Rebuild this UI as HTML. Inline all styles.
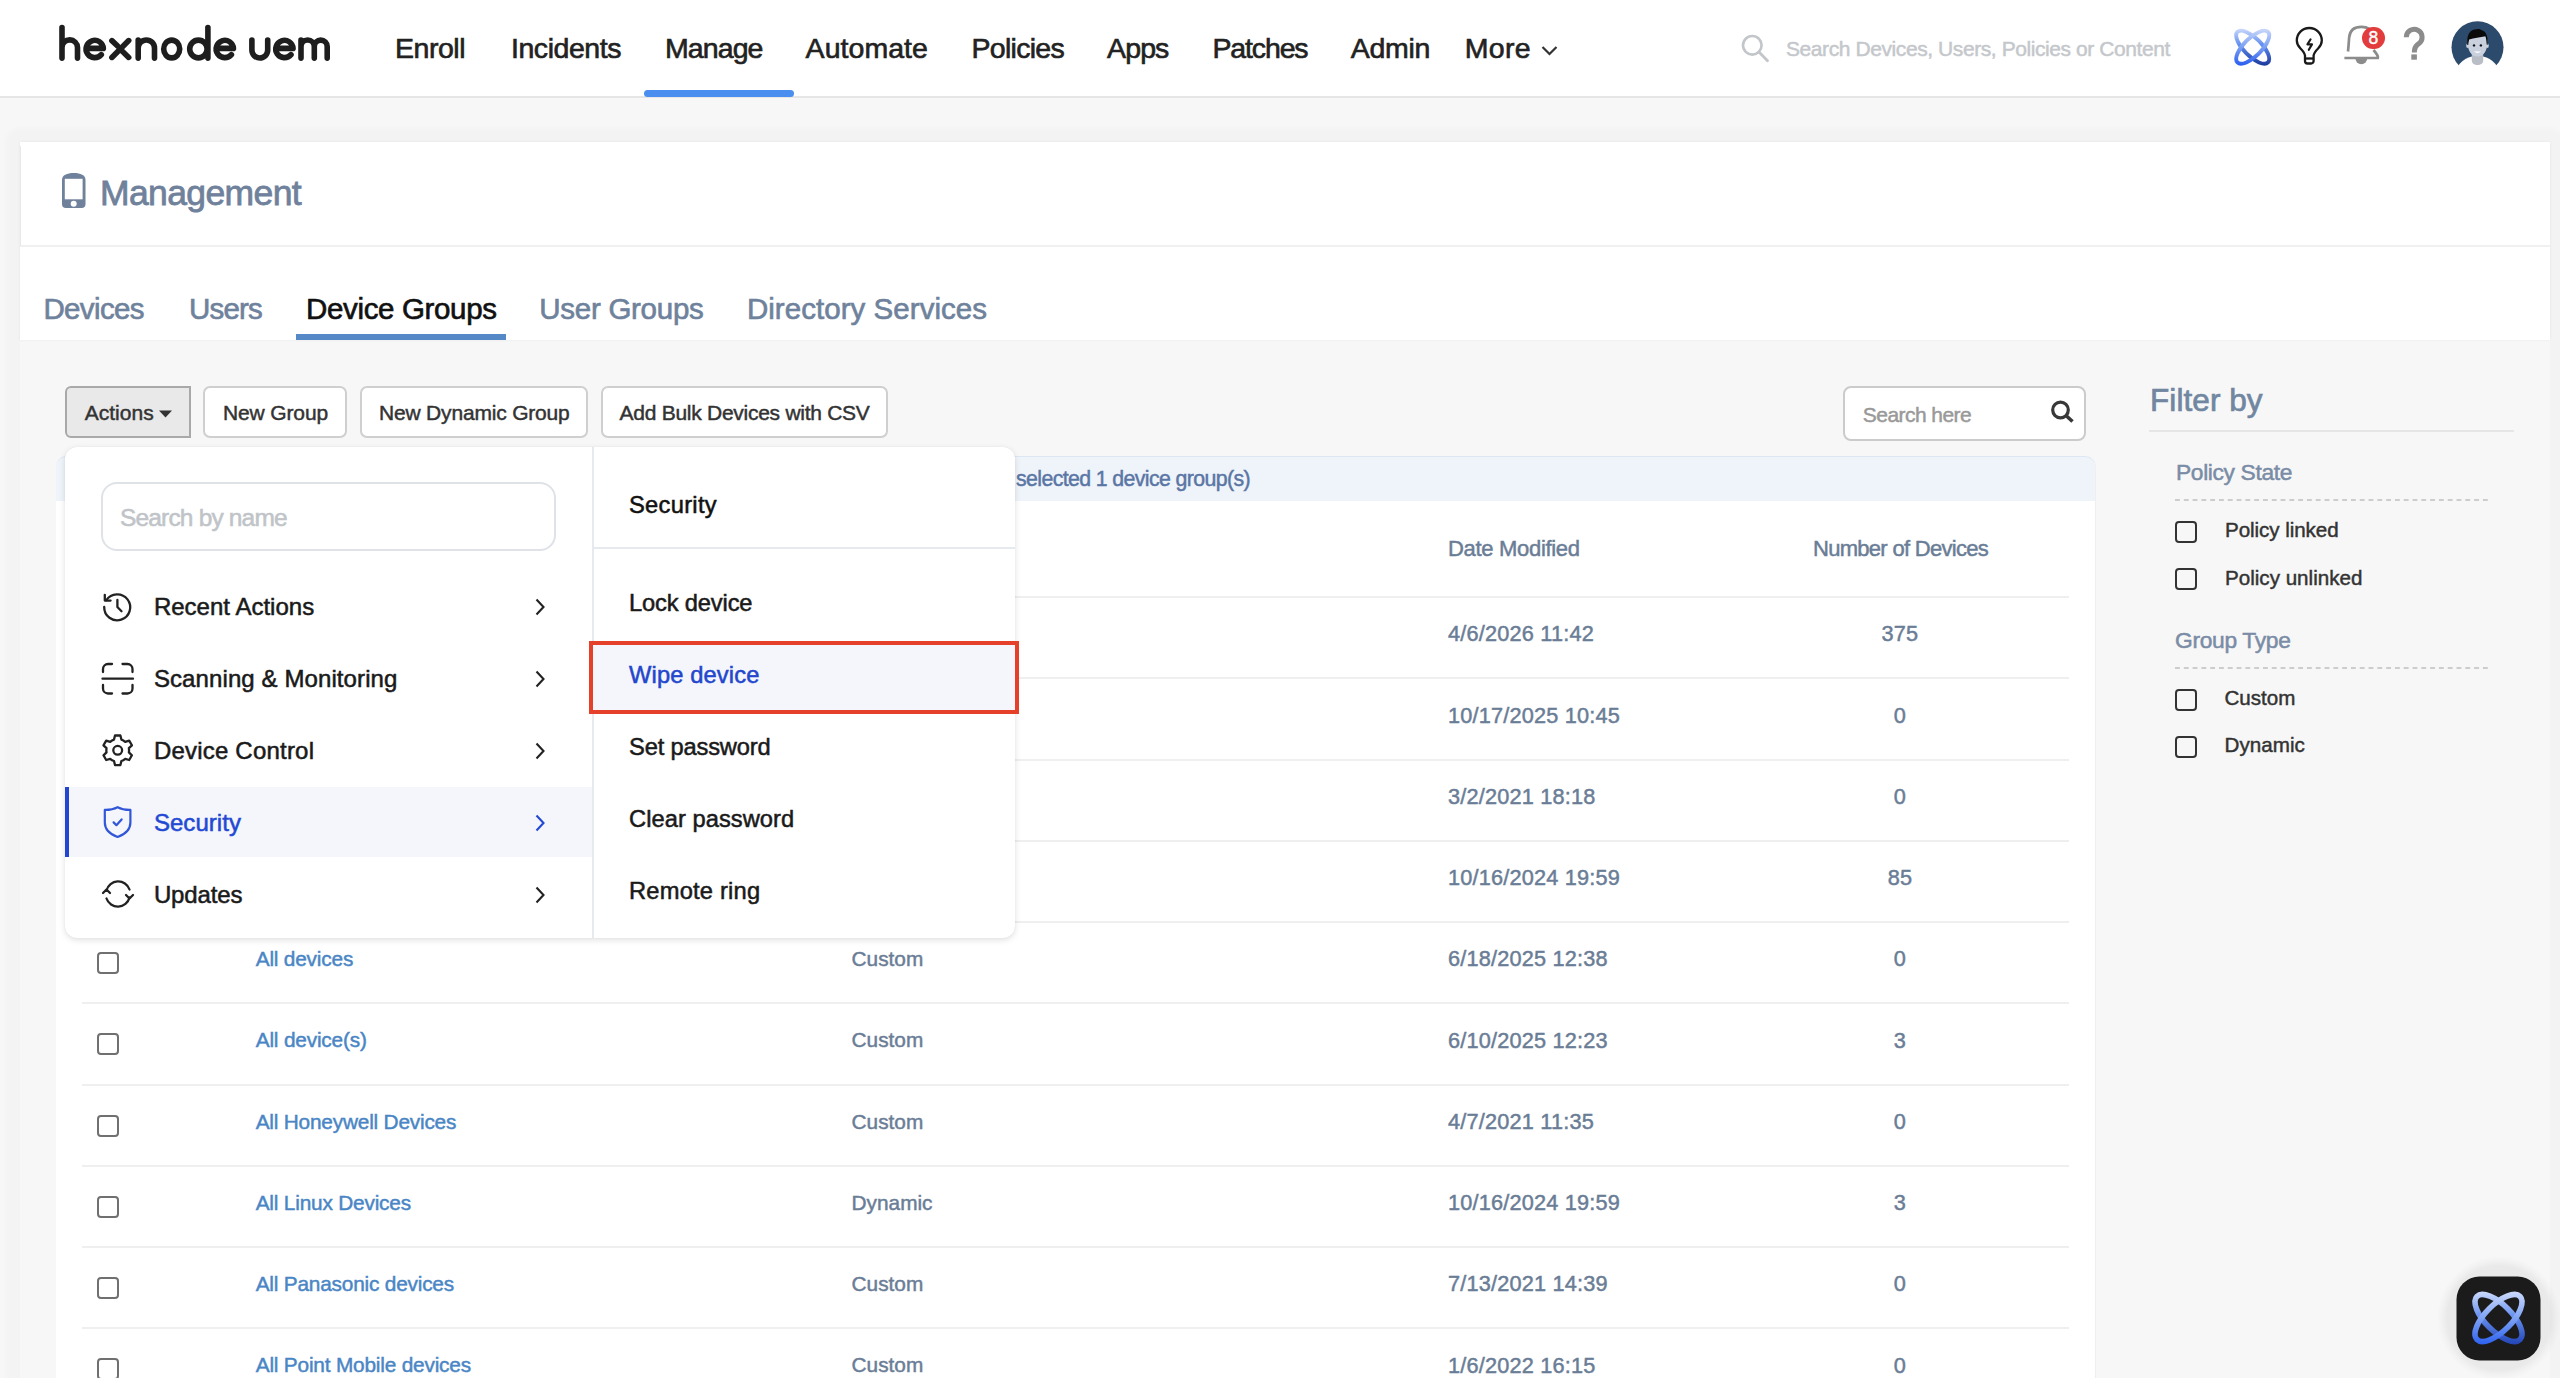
<!DOCTYPE html>
<html><head><meta charset="utf-8"><title>Hexnode UEM - Device Groups</title>
<style>
html,body{margin:0;padding:0;width:2560px;height:1378px;overflow:hidden;background:#f7f7f7;font-family:"Liberation Sans",sans-serif;}
.t{position:absolute;white-space:nowrap;line-height:1;}
.hdr{position:absolute;left:0;top:0;width:2560px;height:96px;background:#fff;}
</style></head><body>
<div class="hdr"></div>
<div style="position:absolute;left:0;top:96px;width:2560px;height:2px;background:#e6e6e6"></div>
<svg style="position:absolute;left:0;top:0" width="360" height="96" viewBox="0 0 360 96">
<g fill="none" stroke="#1e1e1e" stroke-width="5.6" stroke-linecap="round" stroke-linejoin="round">
<path d="M62,58.1 V27.6 M62,47.6 A7.75,7.75 0 0 1 77.5,47.6 V58.1"/>
<path d="M86.05,48.4 H103.35 A8.65,8.65 0 1 0 101.30,54.6"/>
<path d="M111.9,57.4 L128.7,40.6 M121.6,50.6 L128.7,57.4 M111.9,40.6 L117.6,46"/>
<path d="M138.2,58.1 V40 M138.2,48.1 A8.15,8.15 0 0 1 154.5,48.1 V58.1"/>
<ellipse cx="171.7" cy="49" rx="8" ry="8.9"/>
<ellipse cx="198.4" cy="49" rx="8.7" ry="8.9"/>
<path d="M207.9,27.6 V58.1"/>
<path d="M216.15,48.4 H233.45 A8.65,8.65 0 1 0 231.40,54.6"/>
<path d="M251.9,40 V50.1 A7.9,7.9 0 0 0 267.7,50.1 V40"/>
<path d="M275.75,48.4 H293.05 A8.65,8.65 0 1 0 291.00,54.6"/>
<path d="M301,58.1 V40 M301,46.6 A6.65,6.65 0 0 1 314.3,46.6 V58.1 M314.3,46.6 A6.45,6.45 0 0 1 327.2,46.6 V58.1"/>
</g></svg>
<div class="t" style="left:395.00px;top:33.97px;font-size:28.50px;color:#222;letter-spacing:-0.478px;-webkit-text-stroke:0.63px #222;">Enroll</div>
<div class="t" style="left:511.00px;top:33.97px;font-size:28.50px;color:#222;letter-spacing:-0.453px;-webkit-text-stroke:0.63px #222;">Incidents</div>
<div class="t" style="left:665.00px;top:33.97px;font-size:28.50px;color:#222;letter-spacing:-0.916px;-webkit-text-stroke:0.63px #222;">Manage</div>
<div class="t" style="left:805.60px;top:33.97px;font-size:28.50px;color:#222;letter-spacing:0.051px;-webkit-text-stroke:0.63px #222;">Automate</div>
<div class="t" style="left:971.50px;top:33.97px;font-size:28.50px;color:#222;letter-spacing:-0.714px;-webkit-text-stroke:0.63px #222;">Policies</div>
<div class="t" style="left:1107.00px;top:33.97px;font-size:28.50px;color:#222;letter-spacing:-0.865px;-webkit-text-stroke:0.63px #222;">Apps</div>
<div class="t" style="left:1212.40px;top:33.97px;font-size:28.50px;color:#222;letter-spacing:-1.126px;-webkit-text-stroke:0.63px #222;">Patches</div>
<div class="t" style="left:1350.80px;top:33.97px;font-size:28.50px;color:#222;letter-spacing:-0.277px;-webkit-text-stroke:0.63px #222;">Admin</div>
<div class="t" style="left:1464.80px;top:33.97px;font-size:28.50px;color:#222;letter-spacing:0.317px;-webkit-text-stroke:0.63px #222;">More</div>
<svg style="position:absolute;left:1540px;top:44px" width="20" height="14" viewBox="0 0 20 14"><path d="M2.5,3 L9.5,10 L16.5,3" fill="none" stroke="#333" stroke-width="2.2"/></svg>
<div style="position:absolute;left:644px;top:90px;width:150px;height:7px;background:#4a8ef0;border-radius:4px"></div>
<svg style="position:absolute;left:1738px;top:32px" width="34" height="34" viewBox="0 0 34 34"><circle cx="14.3" cy="13.3" r="9.3" fill="none" stroke="#c2c5c9" stroke-width="2.6"/><path d="M21,20 L29.5,28.8" stroke="#c2c5c9" stroke-width="2.8" stroke-linecap="round"/></svg>
<div class="t" style="left:1786.00px;top:38.12px;font-size:21.00px;color:#c4c7cb;letter-spacing:-0.417px;-webkit-text-stroke:0.46px #c4c7cb;">Search Devices, Users, Policies or Content</div>
<svg style="position:absolute;left:2226px;top:20px" width="54" height="54" viewBox="0 0 54 54">
<defs>
<linearGradient id="ag1" gradientUnits="userSpaceOnUse" x1="26.7" y1="9" x2="26.7" y2="45" gradientTransform="rotate(-45 26.7 27.2)"><stop offset="0" stop-color="#c9d8fb"/><stop offset="0.45" stop-color="#5f8cf0"/><stop offset="1" stop-color="#1e3b9e"/></linearGradient>
<linearGradient id="ag2" gradientUnits="userSpaceOnUse" x1="26.7" y1="9" x2="26.7" y2="45" gradientTransform="rotate(45 26.7 27.2)"><stop offset="0" stop-color="#c9d8fb"/><stop offset="0.5" stop-color="#7aa0f3"/><stop offset="1" stop-color="#2c5ff0"/></linearGradient>
</defs>
<g fill="none" stroke-width="3.9">
<ellipse cx="26.7" cy="27.2" rx="21.6" ry="8.9" transform="rotate(45 26.7 27.2)" stroke="url(#ag1)"/>
<ellipse cx="26.7" cy="27.2" rx="21.6" ry="8.9" transform="rotate(-45 26.7 27.2)" stroke="url(#ag2)"/>
</g></svg>
<svg style="position:absolute;left:2290px;top:20px" width="40" height="50" viewBox="0 0 40 50">
<g fill="none" stroke="#1a1a1a" stroke-width="2.3" stroke-linejoin="round">
<path d="M15,35.5 C14.5,32.5 13,31 10.5,28.5 C7.5,25.5 6.8,23 6.8,20.5 A12.5,12.5 0 0 1 31.8,20.5 C31.8,23 31.1,25.5 28.1,28.5 C25.6,31 24.1,32.5 23.6,35.5 V41 A2.5,2.5 0 0 1 21.1,43.5 H17.5 A2.5,2.5 0 0 1 15,41 Z"/>
<path d="M15,38.5 H23.6"/>
<path d="M20.6,19.3 L17.4,24.4 H22 L18.8,29.8" stroke-linecap="round" stroke-width="2.1"/>
</g></svg>
<svg style="position:absolute;left:2340px;top:20px" width="46" height="50" viewBox="0 0 46 50">
<g fill="none" stroke="#8c8c8c" stroke-width="2.7">
<path d="M8,31.5 C8.5,27 8.8,22 9.2,17 C10,10 14.5,6.8 21.5,6.8 C28,6.8 31.5,10 32.5,15"/>
<path d="M4.4,38 H37.8 C38.5,36 37,34 33.5,30"/>
</g>
<path d="M15.3,38 A6,6.2 0 0 0 27.3,38 Z" fill="#8c8c8c"/>
</svg>
<div style="position:absolute;left:2362px;top:26.5px;width:22.5px;height:22.5px;border-radius:50%;background:#e23c3c"></div>
<div class="t" style="left:2368.43px;top:30.39px;font-size:17.50px;color:#fff;-webkit-text-stroke:0.38px #fff;">8</div>
<svg style="position:absolute;left:2398px;top:24px" width="32" height="40" viewBox="0 0 32 40">
<path d="M8.3,13.3 A7.9,7.9 0 1 1 20.5,19.8 C17.5,22 16.4,23.5 16.4,27 V28.5" fill="none" stroke="#8c8c8c" stroke-width="5"/>
<rect x="13.3" y="30.4" width="5.6" height="5.3" fill="#8c8c8c"/>
</svg>
<svg style="position:absolute;left:2448px;top:18px" width="60" height="60" viewBox="0 0 60 60">
<defs><clipPath id="cc"><circle cx="29.5" cy="29.3" r="26.1"/></clipPath><clipPath id="cc2"><circle cx="29.5" cy="29.3" r="27.5"/></clipPath></defs>
<circle cx="29.5" cy="29.3" r="26" fill="#2c4a6b"/>
<g clip-path="url(#cc2)">
<path d="M6,60 V56 C9,46 18,37.8 29.5,37.8 C41,37.8 50,46 53,56 V60 Z" fill="#fff"/>
</g>
<g clip-path="url(#cc)">
<path d="M23.8,34 H35.2 V42.5 C35.2,45.5 32.5,47 29.5,47 C26.5,47 23.8,45.5 23.8,42.5 Z" fill="#b9bdc6"/>
<path d="M22,17.5 C20.5,19.5 19.6,21.5 19.6,23 C19.4,33 23.5,38.5 29.5,38.5 C35.5,38.5 39.6,33 39.4,23 C39.4,21.5 38.5,19.5 37,17.5 Z" fill="#c9d0de"/>
<ellipse cx="19.6" cy="27.8" rx="1.4" ry="2.2" fill="#c9d0de"/><ellipse cx="39.4" cy="27.8" rx="1.4" ry="2.2" fill="#c9d0de"/>
<path d="M19.3,27 C18.5,16 22,11.6 28.5,11.2 C30.5,10.6 32.3,10.9 33.4,12 C37.8,13.3 40.3,17.5 39.6,27 L38.7,26.6 C38.4,22.5 38,20 37.5,18.3 C32,19.5 26,20.3 21.2,21.4 C20.6,23 20.4,25 20.2,27 Z" fill="#0a0a0a"/>
<circle cx="26" cy="27.4" r="1.2" fill="#111"/><circle cx="32.9" cy="27.4" r="1.2" fill="#111"/>
<path d="M25.7,33 Q29.5,37 33.3,33 Q29.5,34 25.7,33 Z" fill="#fff"/>
</g></svg>
<div style="position:absolute;left:6px;top:128px;width:2558px;height:1300px;border-radius:14px;background:rgba(0,0,0,0.015);filter:blur(2px)"></div>
<div style="position:absolute;left:20px;top:340px;width:2530px;height:1040px;background:#f7f7f7"></div>
<div style="position:absolute;left:20px;top:142px;width:2530px;height:198px;background:#fff;box-shadow:0 0 3px rgba(0,0,0,0.06)"></div>
<div style="position:absolute;left:20px;top:245px;width:2530px;height:2px;background:#f0f0f0"></div>
<div style="position:absolute;left:20px;top:146px;width:1px;height:100px;background:#e9e9e9"></div>
<svg style="position:absolute;left:61px;top:172px" width="26" height="38" viewBox="0 0 26 38">
<path d="M1,8 C1,3 6,1 12.8,1 C19.6,1 24.5,3 24.5,8 V32 A4,4 0 0 1 20.5,36 H5 A4,4 0 0 1 1,32 Z" fill="#6f819b"/>
<rect x="3.8" y="6.8" width="17.8" height="20.5" fill="#fff"/>
<circle cx="12.7" cy="31.7" r="3" fill="#fff"/>
</svg>
<div class="t" style="left:100.00px;top:176.45px;font-size:35.50px;color:#6f819b;letter-spacing:-0.622px;-webkit-text-stroke:0.78px #6f819b;">Management</div>
<div class="t" style="left:43.40px;top:294.23px;font-size:29.50px;color:#6f829c;letter-spacing:-0.618px;-webkit-text-stroke:0.65px #6f829c;">Devices</div>
<div class="t" style="left:189.00px;top:294.23px;font-size:29.50px;color:#6f829c;letter-spacing:-0.807px;-webkit-text-stroke:0.65px #6f829c;">Users</div>
<div class="t" style="left:306.00px;top:294.23px;font-size:29.50px;color:#111;letter-spacing:-0.347px;-webkit-text-stroke:0.65px #111;">Device Groups</div>
<div class="t" style="left:539.30px;top:294.23px;font-size:29.50px;color:#6f829c;letter-spacing:-0.275px;-webkit-text-stroke:0.65px #6f829c;">User Groups</div>
<div class="t" style="left:746.90px;top:294.23px;font-size:29.50px;color:#6f829c;letter-spacing:0.048px;-webkit-text-stroke:0.65px #6f829c;">Directory Services</div>
<div style="position:absolute;left:296px;top:334px;width:210px;height:6px;background:#5488c7"></div>
<div style="position:absolute;left:65px;top:386px;width:126px;height:52px;box-sizing:border-box;border:2px solid #a9a9a9;border-radius:6px 0 0 6px;background:#e9e9e9"></div>
<div class="t" style="left:84.70px;top:402.02px;font-size:21.00px;color:#333;letter-spacing:0.019px;-webkit-text-stroke:0.46px #333;">Actions</div>
<svg style="position:absolute;left:158px;top:409px" width="15" height="10" viewBox="0 0 15 10"><path d="M1,1.5 H14 L7.5,8.5 Z" fill="#333"/></svg>
<div style="position:absolute;left:203.0px;top:386px;width:144.0px;height:52px;box-sizing:border-box;border:2px solid #cfcfcf;border-radius:7px;background:#fff"></div>
<div class="t" style="left:223.00px;top:402.02px;font-size:21.00px;color:#333;letter-spacing:-0.135px;-webkit-text-stroke:0.46px #333;">New Group</div>
<div style="position:absolute;left:359.7px;top:386px;width:228.8px;height:52px;box-sizing:border-box;border:2px solid #cfcfcf;border-radius:7px;background:#fff"></div>
<div class="t" style="left:379.00px;top:402.02px;font-size:21.00px;color:#333;letter-spacing:-0.184px;-webkit-text-stroke:0.46px #333;">New Dynamic Group</div>
<div style="position:absolute;left:601.0px;top:386px;width:287.0px;height:52px;box-sizing:border-box;border:2px solid #cfcfcf;border-radius:7px;background:#fff"></div>
<div class="t" style="left:619.60px;top:402.02px;font-size:21.00px;color:#333;letter-spacing:-0.271px;-webkit-text-stroke:0.46px #333;">Add Bulk Devices with CSV</div>
<div style="position:absolute;left:1843px;top:386px;width:243px;height:55px;box-sizing:border-box;border:2px solid #cbcbcb;border-radius:8px;background:#fff"></div>
<div class="t" style="left:1862.80px;top:404.02px;font-size:21.00px;color:#999;letter-spacing:-0.546px;-webkit-text-stroke:0.46px #999;">Search here</div>
<svg style="position:absolute;left:2048px;top:398px" width="30" height="28" viewBox="0 0 30 28"><circle cx="12.5" cy="12" r="7.8" fill="none" stroke="#383838" stroke-width="3.2"/><path d="M18,17.5 L24.5,23.5" stroke="#383838" stroke-width="3.6" stroke-linecap="butt"/></svg>
<div class="t" style="left:2150.00px;top:384.74px;font-size:31.50px;color:#7186a0;letter-spacing:0.075px;-webkit-text-stroke:0.69px #7186a0;">Filter by</div>
<div style="position:absolute;left:2149px;top:429.5px;width:365px;height:2px;background:#e6e6e6"></div>
<div class="t" style="left:2176.00px;top:460.80px;font-size:22.80px;color:#7a8ca6;letter-spacing:-0.366px;-webkit-text-stroke:0.50px #7a8ca6;">Policy State</div>
<div style="position:absolute;left:2175px;top:499.2px;width:313px;height:2px;background-image:linear-gradient(to right,#cdcdcd 0,#cdcdcd 5px,transparent 5px);background-size:8.8px 2px"></div>
<div style="position:absolute;left:2175.0px;top:520.7px;width:22px;height:22px;box-sizing:border-box;border:2.4px solid #333;border-radius:4px"></div>
<div class="t" style="left:2225.00px;top:520.26px;font-size:20.60px;color:#333;letter-spacing:-0.069px;-webkit-text-stroke:0.45px #333;">Policy linked</div>
<div style="position:absolute;left:2175.0px;top:568.3px;width:22px;height:22px;box-sizing:border-box;border:2.4px solid #333;border-radius:4px"></div>
<div class="t" style="left:2225.00px;top:567.86px;font-size:20.60px;color:#333;-webkit-text-stroke:0.45px #333;">Policy unlinked</div>
<div class="t" style="left:2175.00px;top:628.90px;font-size:22.80px;color:#7a8ca6;letter-spacing:-0.322px;-webkit-text-stroke:0.50px #7a8ca6;">Group Type</div>
<div style="position:absolute;left:2175px;top:667.0px;width:313px;height:2px;background-image:linear-gradient(to right,#cdcdcd 0,#cdcdcd 5px,transparent 5px);background-size:8.8px 2px"></div>
<div style="position:absolute;left:2175.0px;top:688.5px;width:22px;height:22px;box-sizing:border-box;border:2.4px solid #333;border-radius:4px"></div>
<div class="t" style="left:2224.50px;top:688.26px;font-size:20.60px;color:#333;letter-spacing:-0.029px;-webkit-text-stroke:0.45px #333;">Custom</div>
<div style="position:absolute;left:2175.0px;top:735.8px;width:22px;height:22px;box-sizing:border-box;border:2.4px solid #333;border-radius:4px"></div>
<div class="t" style="left:2224.50px;top:735.16px;font-size:20.60px;color:#333;letter-spacing:0.053px;-webkit-text-stroke:0.45px #333;">Dynamic</div>
<div style="position:absolute;left:56px;top:456px;width:2039px;height:930px;background:#fff;border-radius:10px 10px 0 0;box-shadow:1px 0 0 #efefef"></div>
<div style="position:absolute;left:56px;top:456px;width:2039px;height:45px;background:#eff3fa;border-top:1.5px solid #dde6f3;box-sizing:border-box;border-radius:10px 10px 0 0"></div>
<div class="t" style="left:1016.00px;top:468.87px;font-size:21.30px;color:#5a76a5;letter-spacing:-0.609px;-webkit-text-stroke:0.47px #5a76a5;">selected 1 device group(s)</div>
<div class="t" style="left:1448.00px;top:537.98px;font-size:22.00px;color:#6a7d96;letter-spacing:-0.311px;-webkit-text-stroke:0.48px #6a7d96;">Date Modified</div>
<div class="t" style="left:1813.00px;top:537.98px;font-size:22.00px;color:#6a7d96;letter-spacing:-0.710px;-webkit-text-stroke:0.48px #6a7d96;">Number of Devices</div>
<div style="position:absolute;left:82px;top:596.00px;width:1987px;height:2px;background:#efefef"></div>
<div style="position:absolute;left:82px;top:677.25px;width:1987px;height:2px;background:#efefef"></div>
<div style="position:absolute;left:82px;top:758.50px;width:1987px;height:2px;background:#efefef"></div>
<div style="position:absolute;left:82px;top:839.75px;width:1987px;height:2px;background:#efefef"></div>
<div style="position:absolute;left:82px;top:921.00px;width:1987px;height:2px;background:#efefef"></div>
<div style="position:absolute;left:82px;top:1002.25px;width:1987px;height:2px;background:#efefef"></div>
<div style="position:absolute;left:82px;top:1083.50px;width:1987px;height:2px;background:#efefef"></div>
<div style="position:absolute;left:82px;top:1164.75px;width:1987px;height:2px;background:#efefef"></div>
<div style="position:absolute;left:82px;top:1246.00px;width:1987px;height:2px;background:#efefef"></div>
<div style="position:absolute;left:82px;top:1327.25px;width:1987px;height:2px;background:#efefef"></div>
<div style="position:absolute;left:96.6px;top:627.1px;width:22px;height:22px;box-sizing:border-box;border:2.2px solid #707070;border-radius:4px"></div>
<div class="t" style="left:255.70px;top:624.19px;font-size:20.80px;color:#4a86c5;letter-spacing:-0.218px;-webkit-text-stroke:0.46px #4a86c5;">Group A</div>
<div class="t" style="left:851.60px;top:624.19px;font-size:20.80px;color:#6a7d96;-webkit-text-stroke:0.46px #6a7d96;">Custom</div>
<div class="t" style="left:1448.00px;top:623.43px;font-size:21.70px;color:#6a7d96;letter-spacing:0.200px;-webkit-text-stroke:0.48px #6a7d96;">4/6/2026 11:42</div>
<div class="t" style="left:1881.60px;top:623.43px;font-size:21.70px;color:#6a7d96;letter-spacing:0.200px;-webkit-text-stroke:0.48px #6a7d96;">375</div>
<div style="position:absolute;left:96.6px;top:708.4px;width:22px;height:22px;box-sizing:border-box;border:2.2px solid #707070;border-radius:4px"></div>
<div class="t" style="left:255.70px;top:705.44px;font-size:20.80px;color:#4a86c5;letter-spacing:-0.221px;-webkit-text-stroke:0.46px #4a86c5;">Group B</div>
<div class="t" style="left:851.60px;top:705.44px;font-size:20.80px;color:#6a7d96;-webkit-text-stroke:0.46px #6a7d96;">Custom</div>
<div class="t" style="left:1448.00px;top:704.68px;font-size:21.70px;color:#6a7d96;letter-spacing:0.200px;-webkit-text-stroke:0.48px #6a7d96;">10/17/2025 10:45</div>
<div class="t" style="left:1893.87px;top:704.68px;font-size:21.70px;color:#6a7d96;-webkit-text-stroke:0.48px #6a7d96;">0</div>
<div style="position:absolute;left:96.6px;top:789.6px;width:22px;height:22px;box-sizing:border-box;border:2.2px solid #707070;border-radius:4px"></div>
<div class="t" style="left:255.70px;top:786.69px;font-size:20.80px;color:#4a86c5;letter-spacing:-0.225px;-webkit-text-stroke:0.46px #4a86c5;">Group C</div>
<div class="t" style="left:851.60px;top:786.69px;font-size:20.80px;color:#6a7d96;-webkit-text-stroke:0.46px #6a7d96;">Custom</div>
<div class="t" style="left:1448.00px;top:785.93px;font-size:21.70px;color:#6a7d96;letter-spacing:0.200px;-webkit-text-stroke:0.48px #6a7d96;">3/2/2021 18:18</div>
<div class="t" style="left:1893.87px;top:785.93px;font-size:21.70px;color:#6a7d96;-webkit-text-stroke:0.48px #6a7d96;">0</div>
<div style="position:absolute;left:96.6px;top:870.9px;width:22px;height:22px;box-sizing:border-box;border:2.2px solid #707070;border-radius:4px"></div>
<div class="t" style="left:255.70px;top:867.94px;font-size:20.80px;color:#4a86c5;letter-spacing:-0.225px;-webkit-text-stroke:0.46px #4a86c5;">Group D</div>
<div class="t" style="left:851.60px;top:867.94px;font-size:20.80px;color:#6a7d96;-webkit-text-stroke:0.46px #6a7d96;">Dynamic</div>
<div class="t" style="left:1448.00px;top:867.18px;font-size:21.70px;color:#6a7d96;letter-spacing:0.200px;-webkit-text-stroke:0.48px #6a7d96;">10/16/2024 19:59</div>
<div class="t" style="left:1887.73px;top:867.18px;font-size:21.70px;color:#6a7d96;letter-spacing:0.200px;-webkit-text-stroke:0.48px #6a7d96;">85</div>
<div style="position:absolute;left:96.6px;top:952.1px;width:22px;height:22px;box-sizing:border-box;border:2.2px solid #707070;border-radius:4px"></div>
<div class="t" style="left:255.70px;top:949.19px;font-size:20.80px;color:#4a86c5;letter-spacing:-0.181px;-webkit-text-stroke:0.46px #4a86c5;">All devices</div>
<div class="t" style="left:851.60px;top:949.19px;font-size:20.80px;color:#6a7d96;-webkit-text-stroke:0.46px #6a7d96;">Custom</div>
<div class="t" style="left:1448.00px;top:948.43px;font-size:21.70px;color:#6a7d96;letter-spacing:0.200px;-webkit-text-stroke:0.48px #6a7d96;">6/18/2025 12:38</div>
<div class="t" style="left:1893.87px;top:948.43px;font-size:21.70px;color:#6a7d96;-webkit-text-stroke:0.48px #6a7d96;">0</div>
<div style="position:absolute;left:96.6px;top:1033.4px;width:22px;height:22px;box-sizing:border-box;border:2.2px solid #707070;border-radius:4px"></div>
<div class="t" style="left:255.70px;top:1030.44px;font-size:20.80px;color:#4a86c5;letter-spacing:-0.174px;-webkit-text-stroke:0.46px #4a86c5;">All device(s)</div>
<div class="t" style="left:851.60px;top:1030.44px;font-size:20.80px;color:#6a7d96;-webkit-text-stroke:0.46px #6a7d96;">Custom</div>
<div class="t" style="left:1448.00px;top:1029.68px;font-size:21.70px;color:#6a7d96;letter-spacing:0.200px;-webkit-text-stroke:0.48px #6a7d96;">6/10/2025 12:23</div>
<div class="t" style="left:1893.87px;top:1029.68px;font-size:21.70px;color:#6a7d96;-webkit-text-stroke:0.48px #6a7d96;">3</div>
<div style="position:absolute;left:96.6px;top:1114.6px;width:22px;height:22px;box-sizing:border-box;border:2.2px solid #707070;border-radius:4px"></div>
<div class="t" style="left:255.70px;top:1111.69px;font-size:20.80px;color:#4a86c5;letter-spacing:-0.195px;-webkit-text-stroke:0.46px #4a86c5;">All Honeywell Devices</div>
<div class="t" style="left:851.60px;top:1111.69px;font-size:20.80px;color:#6a7d96;-webkit-text-stroke:0.46px #6a7d96;">Custom</div>
<div class="t" style="left:1448.00px;top:1110.93px;font-size:21.70px;color:#6a7d96;letter-spacing:0.200px;-webkit-text-stroke:0.48px #6a7d96;">4/7/2021 11:35</div>
<div class="t" style="left:1893.87px;top:1110.93px;font-size:21.70px;color:#6a7d96;-webkit-text-stroke:0.48px #6a7d96;">0</div>
<div style="position:absolute;left:96.6px;top:1195.9px;width:22px;height:22px;box-sizing:border-box;border:2.2px solid #707070;border-radius:4px"></div>
<div class="t" style="left:255.70px;top:1192.94px;font-size:20.80px;color:#4a86c5;letter-spacing:-0.186px;-webkit-text-stroke:0.46px #4a86c5;">All Linux Devices</div>
<div class="t" style="left:851.60px;top:1192.94px;font-size:20.80px;color:#6a7d96;-webkit-text-stroke:0.46px #6a7d96;">Dynamic</div>
<div class="t" style="left:1448.00px;top:1192.18px;font-size:21.70px;color:#6a7d96;letter-spacing:0.200px;-webkit-text-stroke:0.48px #6a7d96;">10/16/2024 19:59</div>
<div class="t" style="left:1893.87px;top:1192.18px;font-size:21.70px;color:#6a7d96;-webkit-text-stroke:0.48px #6a7d96;">3</div>
<div style="position:absolute;left:96.6px;top:1277.1px;width:22px;height:22px;box-sizing:border-box;border:2.2px solid #707070;border-radius:4px"></div>
<div class="t" style="left:255.70px;top:1274.19px;font-size:20.80px;color:#4a86c5;letter-spacing:-0.193px;-webkit-text-stroke:0.46px #4a86c5;">All Panasonic devices</div>
<div class="t" style="left:851.60px;top:1274.19px;font-size:20.80px;color:#6a7d96;-webkit-text-stroke:0.46px #6a7d96;">Custom</div>
<div class="t" style="left:1448.00px;top:1273.43px;font-size:21.70px;color:#6a7d96;letter-spacing:0.200px;-webkit-text-stroke:0.48px #6a7d96;">7/13/2021 14:39</div>
<div class="t" style="left:1893.87px;top:1273.43px;font-size:21.70px;color:#6a7d96;-webkit-text-stroke:0.48px #6a7d96;">0</div>
<div style="position:absolute;left:96.6px;top:1358.4px;width:22px;height:22px;box-sizing:border-box;border:2.2px solid #707070;border-radius:4px"></div>
<div class="t" style="left:255.70px;top:1355.44px;font-size:20.80px;color:#4a86c5;letter-spacing:-0.183px;-webkit-text-stroke:0.46px #4a86c5;">All Point Mobile devices</div>
<div class="t" style="left:851.60px;top:1355.44px;font-size:20.80px;color:#6a7d96;-webkit-text-stroke:0.46px #6a7d96;">Custom</div>
<div class="t" style="left:1448.00px;top:1354.68px;font-size:21.70px;color:#6a7d96;letter-spacing:0.200px;-webkit-text-stroke:0.48px #6a7d96;">1/6/2022 16:15</div>
<div class="t" style="left:1893.87px;top:1354.68px;font-size:21.70px;color:#6a7d96;-webkit-text-stroke:0.48px #6a7d96;">0</div>
<div style="position:absolute;left:65px;top:447px;width:950px;height:491px;background:#fff;border-radius:12px;box-shadow:0 2px 6px rgba(0,0,0,0.12),0 0 1px rgba(0,0,0,0.1)"></div>
<div style="position:absolute;left:591.5px;top:447px;width:2px;height:491px;background:#e6e9ee"></div>
<div style="position:absolute;left:593px;top:546.7px;width:422px;height:2px;background:#e6e9ee"></div>
<div style="position:absolute;left:100.7px;top:482.2px;width:455px;height:69px;box-sizing:border-box;border:2px solid #dfe3e8;border-radius:16px;background:#fff"></div>
<div class="t" style="left:120.00px;top:505.76px;font-size:24.50px;color:#c0c4c8;letter-spacing:-0.829px;-webkit-text-stroke:0.54px #c0c4c8;">Search by name</div>
<div style="position:absolute;left:65px;top:787px;width:526.5px;height:70px;background:#f4f6fc"></div>
<div style="position:absolute;left:65px;top:787px;width:4px;height:70px;background:#2346d0"></div>
<div class="t" style="left:153.90px;top:595.48px;font-size:24.00px;color:#1a1a1a;letter-spacing:0.015px;-webkit-text-stroke:0.53px #1a1a1a;">Recent Actions</div>
<svg style="position:absolute;left:531px;top:595.5px" width="18" height="22" viewBox="0 0 18 22"><path d="M5.5,3.5 L12.5,11 L5.5,18.5" fill="none" stroke="#222" stroke-width="2.1"/></svg>
<div class="t" style="left:153.90px;top:667.48px;font-size:24.00px;color:#1a1a1a;letter-spacing:0.101px;-webkit-text-stroke:0.53px #1a1a1a;">Scanning &amp; Monitoring</div>
<svg style="position:absolute;left:531px;top:667.5px" width="18" height="22" viewBox="0 0 18 22"><path d="M5.5,3.5 L12.5,11 L5.5,18.5" fill="none" stroke="#222" stroke-width="2.1"/></svg>
<div class="t" style="left:153.90px;top:739.48px;font-size:24.00px;color:#1a1a1a;letter-spacing:0.207px;-webkit-text-stroke:0.53px #1a1a1a;">Device Control</div>
<svg style="position:absolute;left:531px;top:739.5px" width="18" height="22" viewBox="0 0 18 22"><path d="M5.5,3.5 L12.5,11 L5.5,18.5" fill="none" stroke="#222" stroke-width="2.1"/></svg>
<div class="t" style="left:153.90px;top:811.48px;font-size:24.00px;color:#2349d4;letter-spacing:0.050px;-webkit-text-stroke:0.53px #2349d4;">Security</div>
<svg style="position:absolute;left:531px;top:811.5px" width="18" height="22" viewBox="0 0 18 22"><path d="M5.5,3.5 L12.5,11 L5.5,18.5" fill="none" stroke="#2349d4" stroke-width="2.1"/></svg>
<div class="t" style="left:153.90px;top:883.48px;font-size:24.00px;color:#1a1a1a;letter-spacing:-0.113px;-webkit-text-stroke:0.53px #1a1a1a;">Updates</div>
<svg style="position:absolute;left:531px;top:883.5px" width="18" height="22" viewBox="0 0 18 22"><path d="M5.5,3.5 L12.5,11 L5.5,18.5" fill="none" stroke="#222" stroke-width="2.1"/></svg>
<svg style="position:absolute;left:100px;top:590px" width="36" height="34" viewBox="0 0 36 34">
<g fill="none" stroke="#222" stroke-width="2.3" stroke-linecap="round" stroke-linejoin="round">
<path d="M6.3,10.2 A13,13 0 1 1 4.2,17"/>
<path d="M4.8,4.8 V10.6 H10.6"/>
<path d="M17.4,10 V17 L21.5,21.2"/>
</g></svg>
<svg style="position:absolute;left:100px;top:661px" width="36" height="36" viewBox="0 0 36 36">
<g fill="none" stroke="#222" stroke-width="2.3" stroke-linecap="round">
<path d="M3,11 V8 A5,5 0 0 1 8,3 H12"/>
<path d="M22.5,3 H27.5 A5,5 0 0 1 32.5,8 V11"/>
<path d="M32.5,24 V27.5 A5,5 0 0 1 27.5,32.5 H22.5"/>
<path d="M12,32.5 H8 A5,5 0 0 1 3,27.5 V24"/>
<path d="M2.5,17.7 H33"/>
</g></svg>
<svg style="position:absolute;left:100px;top:732px" width="36" height="36" viewBox="0 0 36 36">
<g fill="none" stroke="#222" stroke-width="2.3" stroke-linejoin="round">
<path d="M15,3.5 H20.4 L21.4,7.6 C22.8,8.1 24,8.8 25.2,9.8 L29.2,8.6 L31.9,13.3 L28.9,16.2 C29.1,17.6 29.1,19 28.9,20.4 L31.9,23.3 L29.2,28 L25.2,26.8 C24,27.8 22.8,28.5 21.4,29 L20.4,33.1 H15 L14,29 C12.6,28.5 11.4,27.8 10.2,26.8 L6.2,28 L3.5,23.3 L6.5,20.4 C6.3,19 6.3,17.6 6.5,16.2 L3.5,13.3 L6.2,8.6 L10.2,9.8 C11.4,8.8 12.6,8.1 14,7.6 Z"/>
<circle cx="17.7" cy="18.3" r="4.4"/>
</g></svg>
<svg style="position:absolute;left:100px;top:803px" width="36" height="38" viewBox="0 0 36 38">
<g fill="none" stroke="#3256d8" stroke-width="2.2" stroke-linecap="round" stroke-linejoin="round">
<path d="M17.6,4.2 C21,6 25.5,7 30.4,6.9 V19.5 C30.4,26.8 24.5,31.5 17.6,34 C10.7,31.5 4.8,26.8 4.8,19.5 V6.9 C9.7,7 14.2,6 17.6,4.2 Z"/>
<path d="M13.6,19.4 L16.4,22.2 L21.6,16.4"/>
</g></svg>
<svg style="position:absolute;left:100px;top:876px" width="36" height="36" viewBox="0 0 36 36">
<g fill="none" stroke="#222" stroke-width="2.3" stroke-linecap="round" stroke-linejoin="round">
<path d="M6.5,14.5 A12,12 0 0 1 29.5,13.5"/>
<path d="M29.5,21.5 A12,12 0 0 1 6.5,22.5"/>
<path d="M3,17 L6.5,13.5 L10,17"/>
<path d="M26,19 L29.5,22.5 L33,19"/>
</g></svg>
<div class="t" style="left:629.00px;top:494.44px;font-size:23.70px;color:#111;letter-spacing:0.298px;-webkit-text-stroke:0.52px #111;">Security</div>
<div style="position:absolute;left:593px;top:644px;width:422px;height:67px;background:#f4f6fc"></div>
<div class="t" style="left:629.00px;top:592.24px;font-size:23.70px;color:#1a1a1a;letter-spacing:-0.160px;-webkit-text-stroke:0.52px #1a1a1a;">Lock device</div>
<div class="t" style="left:629.00px;top:664.24px;font-size:23.70px;color:#2346cc;letter-spacing:0.137px;-webkit-text-stroke:0.52px #2346cc;">Wipe device</div>
<div class="t" style="left:629.00px;top:736.24px;font-size:23.70px;color:#1a1a1a;letter-spacing:-0.166px;-webkit-text-stroke:0.52px #1a1a1a;">Set password</div>
<div class="t" style="left:629.00px;top:808.24px;font-size:23.70px;color:#1a1a1a;letter-spacing:0.046px;-webkit-text-stroke:0.52px #1a1a1a;">Clear password</div>
<div class="t" style="left:629.00px;top:880.24px;font-size:23.70px;color:#1a1a1a;letter-spacing:0.210px;-webkit-text-stroke:0.52px #1a1a1a;">Remote ring</div>
<div style="position:absolute;left:589px;top:641px;width:429.5px;height:73px;box-sizing:border-box;border:4px solid #e5402a"></div>
<div style="position:absolute;left:2436.5px;top:1256px;width:124px;height:124px;border-radius:50%;background:radial-gradient(circle closest-side,rgba(0,0,0,0.06) 0,rgba(0,0,0,0.055) 84%,rgba(0,0,0,0.025) 92%,rgba(0,0,0,0) 100%)"></div>
<svg style="position:absolute;left:2456px;top:1276px" width="85" height="85" viewBox="0 0 85 85">
<defs>
<linearGradient id="cg1" gradientUnits="userSpaceOnUse" x1="42.5" y1="16" x2="42.5" y2="68" gradientTransform="rotate(-45 42.5 42)"><stop offset="0" stop-color="#c9d8fb"/><stop offset="0.45" stop-color="#6a93f0"/><stop offset="1" stop-color="#2446b8"/></linearGradient>
<linearGradient id="cg2" gradientUnits="userSpaceOnUse" x1="42.5" y1="16" x2="42.5" y2="68" gradientTransform="rotate(45 42.5 42)"><stop offset="0" stop-color="#c9d8fb"/><stop offset="0.5" stop-color="#7fa3f4"/><stop offset="1" stop-color="#2f63f0"/></linearGradient>
</defs>
<rect x="0.5" y="0.5" width="84" height="84" rx="23" fill="#1b1b1b"/>
<g fill="none" stroke-width="5.6">
<ellipse cx="42.5" cy="42" rx="30.5" ry="13.2" transform="rotate(45 42.5 42)" stroke="url(#cg1)"/>
<ellipse cx="42.5" cy="42" rx="30.5" ry="13.2" transform="rotate(-45 42.5 42)" stroke="url(#cg2)"/>
</g></svg>
</body></html>
